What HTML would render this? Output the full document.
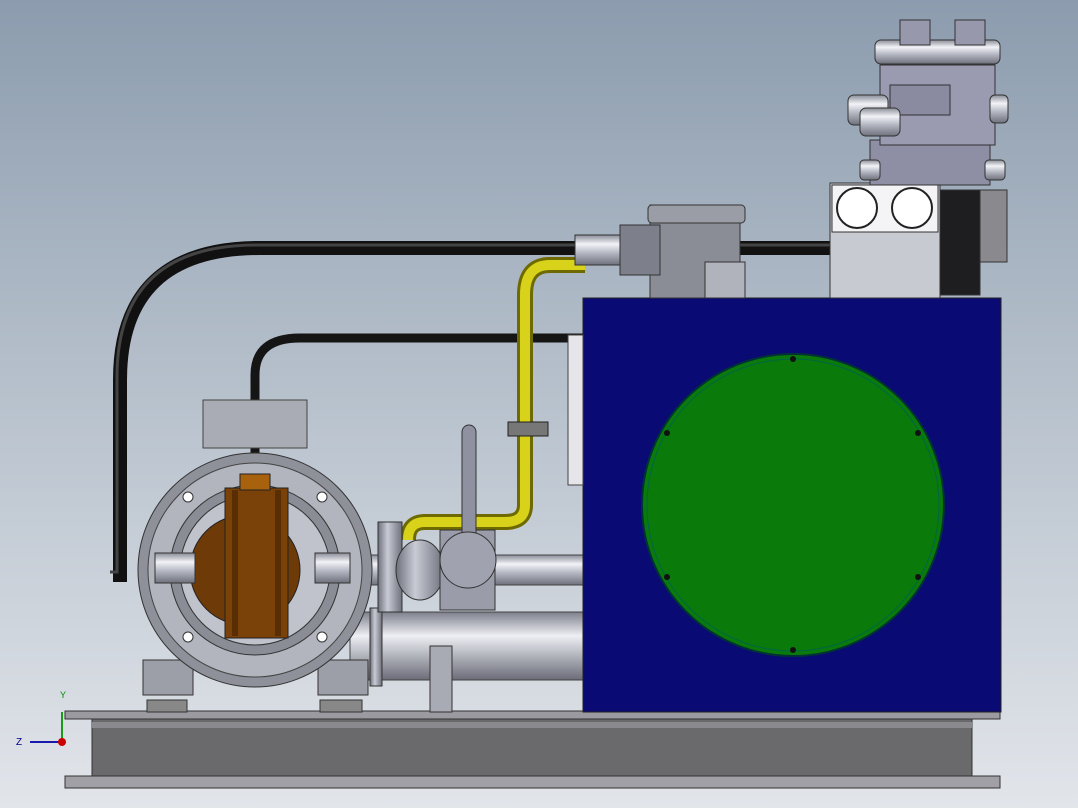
<!DOCTYPE html>
<html><head><style>
html,body{margin:0;padding:0;width:1078px;height:808px;overflow:hidden}
body{background:linear-gradient(#8c9cae 0%,#b8c2cd 50%,#e2e5ea 100%)}
svg{display:block}
</style></head><body>
<svg width="1078" height="808" viewBox="0 0 1078 808" xmlns="http://www.w3.org/2000/svg">
<defs>
<linearGradient id="pipe" x1="0" y1="0" x2="0" y2="1"><stop offset="0" stop-color="#8a8d98"/><stop offset="0.3" stop-color="#f2f3f7"/><stop offset="0.6" stop-color="#b4b6c2"/><stop offset="1" stop-color="#6e707c"/></linearGradient>
<linearGradient id="cyl" x1="0" y1="0" x2="0" y2="1"><stop offset="0" stop-color="#7d7f8c"/><stop offset="0.35" stop-color="#eeeff4"/><stop offset="1" stop-color="#6a6c78"/></linearGradient>
<linearGradient id="vcyl" x1="0" y1="0" x2="1" y2="0"><stop offset="0" stop-color="#6e707c"/><stop offset="0.4" stop-color="#c8cad4"/><stop offset="1" stop-color="#6e707c"/></linearGradient>
</defs>
<!-- base -->
<rect x="65" y="711" width="935" height="8" fill="#9a9aa0" stroke="#333" stroke-width="1"/>
<rect x="92" y="719" width="880" height="58" fill="#6a6a6c" stroke="#333"/>
<rect x="65" y="776" width="935" height="12" fill="#a0a0a6" stroke="#333"/>
<rect x="92" y="722" width="880" height="6" fill="#8a8a8e"/>
<!-- thick black hose -->
<path d="M113 575 L120 575 L120 380 Q120 248 260 248 L835 248" fill="none" stroke="#111" stroke-width="14"/>
<path d="M113 575 L120 575 L120 380 Q120 248 260 248 L835 248" fill="none" stroke="#444" stroke-width="3" transform="translate(-3,-3)"/>
<!-- thin hose -->
<path d="M255 490 L255 375 Q255 338 300 338 L585 338" fill="none" stroke="#151515" stroke-width="9"/>
<!-- yellow pipe -->
<path d="M585 265 L550 265 Q525 265 525 295 L525 505 Q525 522 505 522 L425 522 Q408 522 408 540" fill="none" stroke="#6e6a00" stroke-width="16"/>
<path d="M585 265 L550 265 Q525 265 525 295 L525 505 Q525 522 505 522 L425 522 Q408 522 408 540" fill="none" stroke="#d8d21a" stroke-width="10"/>
<rect x="508" y="422" width="40" height="14" fill="#777" stroke="#222"/>
<!-- pipes to tank -->
<rect x="350" y="612" width="235" height="68" fill="url(#cyl)" stroke="#444"/>
<rect x="370" y="608" width="12" height="78" fill="url(#vcyl)" stroke="#333"/>
<rect x="430" y="646" width="22" height="66" fill="#a8aab4" stroke="#333"/>
<rect x="340" y="555" width="245" height="30" fill="url(#pipe)" stroke="#444"/>
<rect x="378" y="522" width="24" height="90" fill="url(#vcyl)" stroke="#333"/>
<ellipse cx="420" cy="570" rx="24" ry="30" fill="url(#vcyl)" stroke="#333"/>
<rect x="440" y="530" width="55" height="80" fill="#9a9caa" stroke="#333"/>
<rect x="462" y="425" width="14" height="145" rx="7" fill="#8f91a0" stroke="#333"/>
<circle cx="468" cy="560" r="28" fill="#a0a2b0" stroke="#333"/>
<!-- motor -->
<rect x="203" y="400" width="104" height="48" fill="#a9abb5" stroke="#444"/>
<rect x="143" y="660" width="50" height="35" fill="#9c9ea8" stroke="#333"/>
<rect x="318" y="660" width="50" height="35" fill="#9c9ea8" stroke="#333"/>
<rect x="147" y="700" width="40" height="12" fill="#888" stroke="#333"/>
<rect x="320" y="700" width="42" height="12" fill="#888" stroke="#333"/>
<circle cx="255" cy="570" r="117" fill="#8e909a" stroke="#333"/>
<circle cx="255" cy="570" r="107" fill="#b2b4be" stroke="#444"/>
<circle cx="255" cy="570" r="85" fill="#8a8c96" stroke="#333"/>
<circle cx="255" cy="570" r="75" fill="#c0c2cc" stroke="#333"/>
<g fill="#fff" stroke="#333"><circle cx="188" cy="497" r="5"/><circle cx="322" cy="497" r="5"/><circle cx="188" cy="637" r="5"/><circle cx="322" cy="637" r="5"/></g>
<circle cx="245" cy="570" r="55" fill="#6e3a08" stroke="#222"/>
<rect x="225" y="488" width="63" height="150" fill="#7a4208" stroke="#222"/>
<rect x="232" y="490" width="6" height="146" fill="#5a2e04"/>
<rect x="275" y="490" width="6" height="146" fill="#5a2e04"/>
<rect x="240" y="474" width="30" height="16" fill="#a8620e" stroke="#222"/>
<rect x="155" y="553" width="40" height="30" fill="url(#pipe)" stroke="#333"/>
<rect x="315" y="553" width="35" height="30" fill="url(#pipe)" stroke="#333"/>
<!-- tank -->
<rect x="583" y="298" width="418" height="414" fill="#0a0a74" stroke="#222"/>
<rect x="568" y="335" width="15" height="150" fill="#e6e6ea" stroke="#444"/>
<circle cx="793" cy="505" r="151" fill="#0a7a0a" stroke="#033" stroke-width="2"/>
<circle cx="793" cy="505" r="146" fill="none" stroke="#064" stroke-width="1"/>
<g fill="#111"><circle cx="793" cy="359" r="3"/><circle cx="793" cy="650" r="3"/><circle cx="667" cy="433" r="3"/><circle cx="918" cy="433" r="3"/><circle cx="667" cy="577" r="3"/><circle cx="918" cy="577" r="3"/></g>
<!-- filter on top -->
<rect x="650" y="205" width="90" height="93" fill="#8a8c96" stroke="#333"/>
<rect x="648" y="205" width="97" height="18" rx="4" fill="#9a9ca6" stroke="#333"/>
<rect x="705" y="262" width="40" height="36" fill="#b0b2bc" stroke="#333"/>
<rect x="575" y="235" width="45" height="30" fill="url(#pipe)" stroke="#333"/>
<rect x="620" y="225" width="40" height="50" fill="#7d7f8a" stroke="#333"/>
<!-- valve block -->
<rect x="830" y="183" width="110" height="115" fill="#c8cad2" stroke="#333"/>
<rect x="832" y="185" width="106" height="47" fill="#f4f4f6" stroke="#333"/>
<circle cx="857" cy="208" r="20" fill="#fff" stroke="#222" stroke-width="2"/>
<circle cx="912" cy="208" r="20" fill="#fff" stroke="#222" stroke-width="2"/>
<rect x="940" y="190" width="40" height="105" fill="#1e1e20" stroke="#333"/>
<rect x="980" y="190" width="27" height="72" fill="#8a8a8e" stroke="#333"/>
<rect x="870" y="140" width="120" height="45" fill="#8e8ea4" stroke="#333"/>
<rect x="860" y="160" width="20" height="20" rx="4" fill="url(#pipe)" stroke="#333"/>
<rect x="985" y="160" width="20" height="20" rx="4" fill="url(#pipe)" stroke="#333"/>
<rect x="880" y="65" width="115" height="80" fill="#9a9ab0" stroke="#333"/>
<rect x="890" y="85" width="60" height="30" fill="#8a8aa0" stroke="#333"/>
<rect x="848" y="95" width="40" height="30" rx="6" fill="url(#pipe)" stroke="#333"/>
<rect x="860" y="108" width="40" height="28" rx="6" fill="url(#pipe)" stroke="#333"/>
<rect x="990" y="95" width="18" height="28" rx="5" fill="url(#pipe)" stroke="#333"/>
<rect x="875" y="40" width="125" height="24" rx="6" fill="url(#pipe)" stroke="#333"/>
<rect x="900" y="20" width="30" height="25" fill="#9898ac" stroke="#333"/>
<rect x="955" y="20" width="30" height="25" fill="#9898ac" stroke="#333"/>
<!-- axis -->
<line x1="62" y1="742" x2="62" y2="712" stroke="#1a9a1a" stroke-width="2"/>
<line x1="62" y1="742" x2="30" y2="742" stroke="#1a1aaa" stroke-width="2"/>
<circle cx="62" cy="742" r="4" fill="#c00"/>
<text x="60" y="698" font-family="Liberation Sans,sans-serif" font-size="9" fill="#080">Y</text>
<text x="16" y="745" font-family="Liberation Sans,sans-serif" font-size="10" fill="#008">Z</text>
</svg>
</body></html>
